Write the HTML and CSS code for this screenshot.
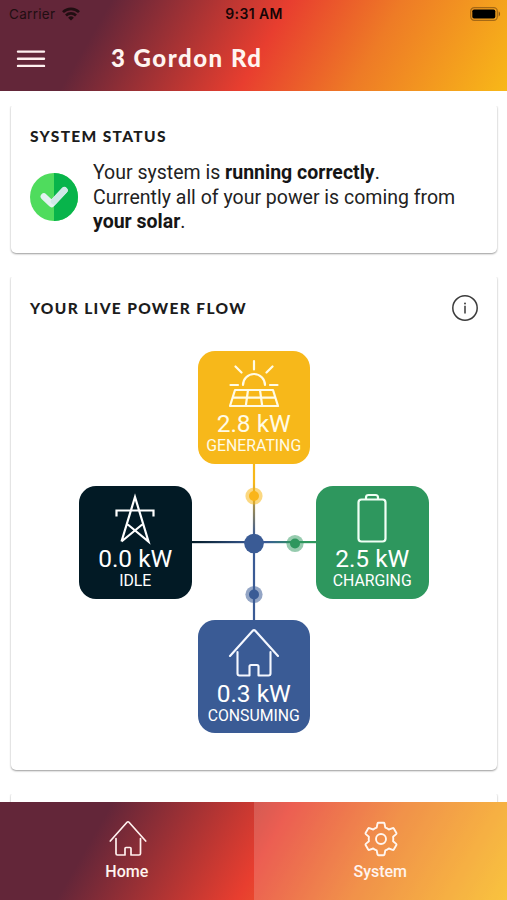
FILE: index.html
```html
<!DOCTYPE html>
<html lang="en">
<head>
<meta charset="utf-8">
<meta name="viewport" content="width=device-width">
<title>3 Gordon Rd</title>
<link rel="stylesheet" href="styles.css">
</head>
<body>
<header class="top">
  <div class="statusbar">
    <div class="carrier"><span>Carrier</span>
      <svg width="18" height="14" viewBox="0 0 18 14" fill="none" stroke="#210e12" stroke-width="2.7"><path d="M1 5.1a11.4 11.4 0 0 1 16 0M4 8.5a7.1 7.1 0 0 1 10 0"/><path d="M9 13.6 6.1 10.7a4.1 4.1 0 0 1 5.8 0Z" fill="#210e12" stroke="none"/></svg>
    </div>
    <div class="clock">9:31 AM</div>
    <svg class="battery" width="31" height="14" viewBox="0 0 31 14"><rect x=".7" y=".7" width="26.6" height="12.6" rx="3.6" fill="none" stroke="#8b5713" stroke-opacity=".75" stroke-width="1.2"/><rect x="2.3" y="2.4" width="23" height="9.2" rx="1.8"/><path d="M28.7 4.6c1.8.6 1.8 4.2 0 4.8Z" fill="#8b5713"/></svg>
  </div>
  <div class="titlebar">
    <svg class="menu" width="30" height="20" viewBox="0 0 30 20" stroke="#fff0f0" stroke-width="2.4" stroke-linecap="round"><path d="M2 2.6h26M2 9.7h26M2 16.9h26"/></svg>
    <h1>3 Gordon Rd</h1>
  </div>
</header>

<main>
  <section class="card status">
    <h2>SYSTEM STATUS</h2>
    <div class="status-row">
      <svg width="48" height="48" viewBox="0 0 48 48"><circle cx="24" cy="24" r="24" fill="#4fdc5d"/><path d="M24 0a24 24 0 0 1 0 48Z" fill="#08b44b"/><path d="m13.9 23.6 7.7 7.3L34.4 17.3" fill="none" stroke="#e4f2f2" stroke-width="6.6" stroke-linecap="round" stroke-linejoin="round"/><path d="M24 28.4 34.4 17.3" fill="none" stroke="#d0e8e8" stroke-width="6.4" stroke-linecap="round"/></svg>
      <p>Your system is <b>running correctly</b>.<br>Currently all of your power is coming from<br><b>your solar</b>.</p>
    </div>
  </section>

  <section class="card flow">
    <div class="flow-head">
      <h2>YOUR LIVE POWER FLOW</h2>
      <svg width="28" height="28" viewBox="0 0 28 28"><circle cx="14" cy="14" r="12.2" fill="none" stroke="#3c3c3c" stroke-width="1.5"/><path d="M14 11.8v7.7" stroke="#444" stroke-width="1.6"/><circle cx="14" cy="9.4" r="1" fill="#444"/></svg>
    </div>
    <div class="diagram">
      <svg class="links" width="350" height="382" viewBox="0 0 350 382">
        <defs>
          <linearGradient id="gen" gradientUnits="userSpaceOnUse" x1="0" y1="112" x2="0" y2="192"><stop offset=".25" stop-color="#f7b81a"/><stop offset=".9" stop-color="#3a5b95"/></linearGradient>
          <linearGradient id="grid" gradientUnits="userSpaceOnUse" x1="112" y1="0" x2="175" y2="0"><stop stop-color="#021a25"/><stop offset="1" stop-color="#3a5b95"/></linearGradient>
          <linearGradient id="bat" gradientUnits="userSpaceOnUse" x1="175" y1="0" x2="237" y2="0"><stop offset=".2" stop-color="#3a5b95"/><stop offset=".7" stop-color="#2e975e"/></linearGradient>
        </defs>
        <rect x="173.900" y="112" width="2.200" height="80" fill="url(#gen)"/>
        <rect x="173.900" y="192" width="2.200" height="78" fill="#3a5b95"/>
        <rect x="112" y="190" width="63" height="2.200" fill="url(#grid)"/>
        <rect x="175" y="190" width="63" height="2.200" fill="url(#bat)"/>
        <circle cx="175" cy="192.500" r="9.800" fill="#3a5b95"/>
        <circle cx="175" cy="145" r="8.600" fill="#f7b81a" opacity=".55"/><circle cx="175" cy="145" r="5" fill="#fab518"/>
        <circle cx="216" cy="192.500" r="8.600" fill="#2e975e" opacity=".5"/><circle cx="216" cy="192.500" r="5" fill="#2e975e"/>
        <circle cx="175" cy="243.500" r="8.600" fill="#3a5b95" opacity=".55"/><circle cx="175" cy="243.500" r="5" fill="#3a5b95"/>
      </svg>
      <div class="node generating">
        <svg width="52" height="50" viewBox="0 0 52 50" fill="none" stroke="#fffbe6" stroke-width="2.200" stroke-linecap="round" stroke-linejoin="round"><path d="M26 2.200V10.500M7.500 7.500 13.500 13.500M44.500 7.500 38.500 13.500M2.500 26H10M42 26h7.500M15 26a11 11 0 0 1 22 0M7 31H45L50 47H2ZM4.700 38.700H47.300M20 31 17.800 47M32 31 34.200 47"/></svg>
        <strong>2.8 kW</strong><span>GENERATING</span>
      </div>
      <div class="node idle">
        <svg width="52" height="50" viewBox="0 0 52 50" fill="none" stroke="#fff" stroke-width="2.200"><path d="M12.500 47.500 26 3 39.500 47.500 18.800 30.500M12.500 47.500 33.200 30.500M7.500 22.500V16.500H44.500V22.500"/></svg>
        <strong>0.0 kW</strong><span>IDLE</span>
      </div>
      <div class="node charging">
        <svg width="52" height="50" viewBox="0 0 52 50" fill="none" stroke="#f0fff5" stroke-width="2.200"><rect x="12.500" y="5.500" width="27" height="42" rx="3"/><path d="M20 5.500V3.500Q20 1 22.500 1h7Q32 1 32 3.500V5.500"/></svg>
        <strong>2.5 kW</strong><span>CHARGING</span>
      </div>
      <div class="node consuming">
        <svg width="52" height="50" viewBox="0 0 52 50" fill="none" stroke="#f5f8ff" stroke-width="2.100" stroke-linecap="round" stroke-linejoin="round"><path d="M2 27 24.500 2Q26 .3 27.500 2L50 27M9.500 23V44.500Q9.500 46.500 11.500 46.500H21.500V37.500Q21.500 36 23 36H29Q30.500 36 30.500 37.500V46.500H40.500Q42.500 46.500 42.500 44.500V23"/></svg>
        <strong>0.3 kW</strong><span>CONSUMING</span>
      </div>
    </div>
  </section>
  <section class="card next"></section>
</main>

<nav class="tabs">
  <a class="tab">
    <svg width="38" height="38" viewBox="0 0 38 38" fill="none" stroke="#fff0ee" stroke-width="1.700" stroke-linecap="round" stroke-linejoin="round"><path d="M1.300 21 18 2.300Q19 1.200 20 2.300L36.700 21M7 18.500V33.500Q7 35 8.500 35H16V28.500Q16 27.500 17 27.500H21Q22 27.500 22 28.500V35H30Q31.500 35 31.500 33.500V18.500"/></svg>
    <span>Home</span>
  </a>
  <a class="tab lit">
    <svg width="38" height="38" viewBox="0 0 38 38" fill="none" stroke="#fff6ef" stroke-width="1.900" stroke-linejoin="round"><circle cx="19" cy="19" r="5"/><path d="M15.500 3.500Q15.700 2.800 16.500 2.800H21.500Q22.300 2.800 22.500 3.500L23.300 7.600Q25.200 8.200 26.800 9.500L30.700 8.100Q31.400 7.900 31.800 8.500L34.400 12.900Q34.700 13.600 34.200 14.100L31.100 16.800Q31.500 19 31.100 21.200L34.200 23.900Q34.700 24.400 34.400 25.100L31.800 29.500Q31.400 30.100 30.700 29.900L26.800 28.500Q25.200 29.800 23.300 30.400L22.500 34.500Q22.300 35.200 21.500 35.200H16.500Q15.700 35.200 15.500 34.500L14.700 30.400Q12.800 29.800 11.200 28.500L7.300 29.900Q6.600 30.100 6.200 29.500L3.600 25.100Q3.300 24.400 3.800 23.900L6.900 21.200Q6.500 19 6.900 16.800L3.800 14.100Q3.300 13.600 3.600 12.900L6.200 8.500Q6.600 7.900 7.300 8.100L11.200 9.500Q12.800 8.200 14.700 7.600Z"/></svg>
    <span>System</span>
  </a>
</nav>
</body>
</html>
```
FILE: styles.css
```css
* { box-sizing: border-box; }
body {
  margin: 0;
  height: 900px;
  display: flex;
  flex-direction: column;
  overflow: hidden;
  background: #fff;
  color: #222;
  font-family: Roboto, sans-serif;
}
.top, .tabs {
  flex: none;
  background: linear-gradient(120deg, #632639 0%, #632639 20%, #e83e2f 52%, #ee7b26 72%, #f8b818 100%);
}
.top { height: 91px; }
.statusbar {
  height: 28px;
  display: grid;
  grid-template-columns: 1fr auto 1fr;
  align-items: center;
  padding: 0 6px 0 9px;
  font-family: Inter, sans-serif;
  font-size: 13.5px;
  color: #210e12;
}
.carrier { display: flex; align-items: center; gap: 7px; letter-spacing: .3px; }
.clock { margin: -2px 2px 0 0; font-size: 14px; font-weight: 600; letter-spacing: .4px; color: #160506; }
.battery { justify-self: end; }
.titlebar { display: flex; align-items: center; height: 60px; padding: 1px 0 0 16px; }
h1, h2, p { margin: 0; }
h1 {
  margin: -1px 0 0 65px;
  font: 900 24px/30px Lato, sans-serif;
  letter-spacing: 1.5px;
  color: #fff4f0;
}
main { flex: 1; min-height: 0; overflow: hidden; padding: 13px 10px 0 11px; }
.card {
  border-radius: 5px;
  background: #fff;
  box-shadow: 0 1px 2px rgba(0, 0, 0, .4);
  clip-path: inset(3px -2px -4px -2px);
  padding: 0 19px;
}
h2 {
  font: 900 15.500px/20px Lato, sans-serif;
  letter-spacing: 1.35px;
  color: #1c1c1c;
}
.status { height: 150px; padding-top: 23px; margin-top: -1px; margin-bottom: 21px; }
.status-row { display: flex; align-items: center; gap: 15px; margin-top: 14px; }
.status-row p { font-size: 19.500px; line-height: 24.500px; white-space: nowrap; padding-top: 1px; }
.status-row b { font-weight: 700; color: #161616; }
.flow { height: 496px; padding-top: 20px; margin-bottom: 21px; }
.flow-head { display: flex; align-items: center; justify-content: space-between; height: 28px; margin-right: -1px; }
.diagram { position: relative; width: 350px; height: 382px; margin: 29px 0 0 49px; }
.links { position: absolute; inset: 0; }
.node {
  position: absolute;
  width: 112.500px;
  height: 112.500px;
  border-radius: 17px;
  padding-top: 8px;
  display: flex;
  flex-direction: column;
  align-items: center;
  color: #fff;
}
.node svg { flex: none; overflow: visible; }
.node strong { font-weight: 400; font-size: 24.500px; line-height: 29px; }
.node span { font-size: 15.800px; line-height: 15px; }
.generating { left: 118.500px; top: 0; background: #f7b81a; color: #fffbe6; }
.idle { left: 0; top: 135px; background: #021a25; }
.charging { left: 237px; top: 135px; background: #2e975e; }
.consuming { left: 118.500px; top: 269px; padding-top: 9px; background: #3a5b95; }
.next { height: 60px; }
.tabs { height: 98px; display: flex; }
.tab {
  flex: 1;
  display: flex;
  flex-direction: column;
  align-items: center;
  padding-top: 18px;
  color: #fff4ef;
  font-size: 16px;
  font-weight: 500;
  line-height: 20px;
}
.tab svg { margin-left: 2px; }
.tab span { margin-top: 4px; }
.lit { background: rgba(255, 255, 255, .17); }
```
